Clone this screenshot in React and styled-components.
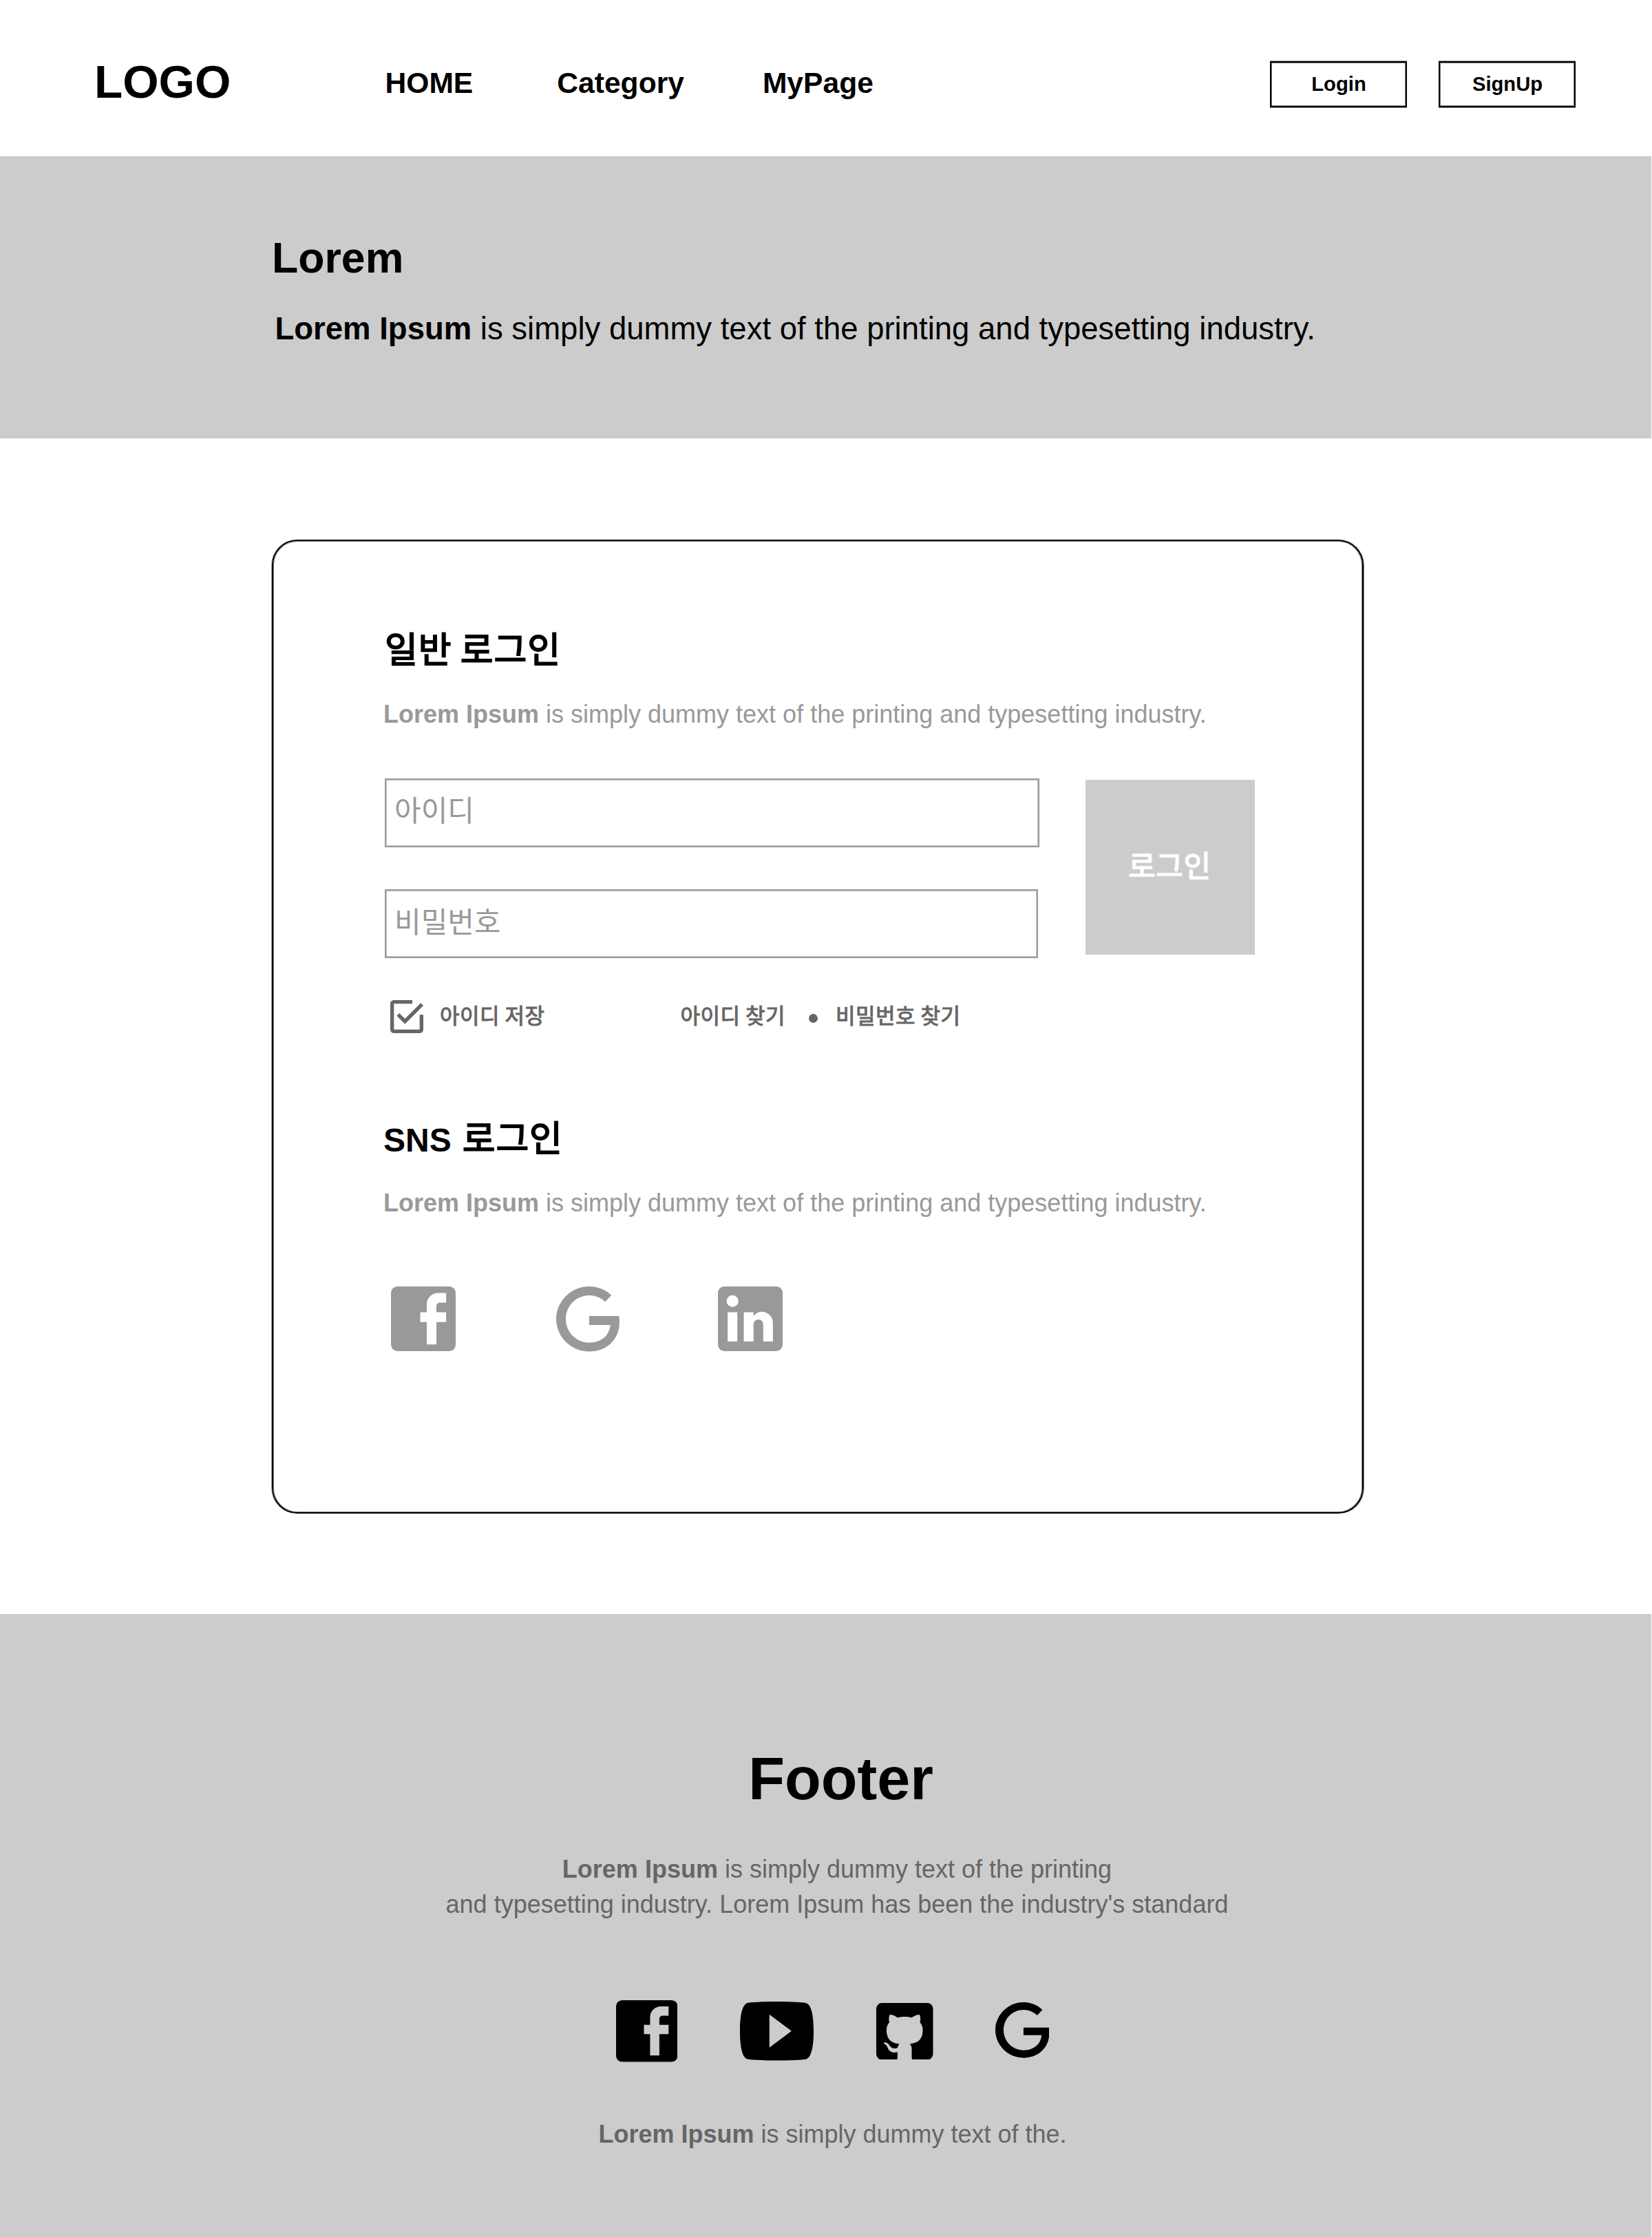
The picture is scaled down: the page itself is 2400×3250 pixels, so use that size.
import React from "react";
import styled, { createGlobalStyle, css } from "styled-components";

const latin = `"Liberation Sans", Arial, "Noto Sans CJK KR", sans-serif`;
const hangul = `"Noto Sans CJK KR", "Liberation Sans", sans-serif`;

/* A weight between the regular and bold cuts of the Hangul face. */
const semibold = css`
  font-weight: 400;
  -webkit-text-stroke: 0.034em currentColor;
  letter-spacing: 0.016em;
`;

const GlobalStyle = createGlobalStyle`
  *, *::before, *::after { box-sizing: border-box; }
  body { margin: 0; background: #fff; color: #000; font-family: ${latin}; }
  h1, h2, p { margin: 0; }
  button, input { font: inherit; }
`;

const Page = styled.div`
  width: 2400px;
  height: 3250px;
  display: flex;
  flex-direction: column;
  overflow: hidden;
`;

/* Header */
const Header = styled.header`
  height: 227px;
  flex: none;
  display: flex;
  align-items: flex-start;
  padding: 81px 111px 0 137px;
`;

const Logo = styled.div`
  flex: 0 0 422.5px;
  font-size: 67.4px;
  line-height: 75px;
  font-weight: 700;
`;

const Nav = styled.nav`
  display: grid;
  grid-template-columns: 249.8px 298.6px auto;
  padding-top: 15px;
`;

const NavLink = styled.span`
  font-size: 42.6px;
  line-height: 48px;
  font-weight: 700;
`;

const AuthButtons = styled.div`
  display: flex;
  gap: 46px;
  margin-left: auto;
  padding-top: 8px;
`;

const AuthButton = styled.button`
  width: 199px;
  height: 67px;
  display: flex;
  align-items: center;
  justify-content: center;
  padding: 0 0 0 1px;
  background: #fff;
  color: #000;
  border: 2px solid #000;
  box-shadow: 0 -1px 0 rgba(0, 0, 0, 0.4), 0 1px 0 rgba(0, 0, 0, 0.4),
    inset 0 0 0 1px rgba(0, 0, 0, 0.5);
  font-size: 29.2px;
  line-height: 33px;
  font-weight: 700;
`;

/* Hero */
const Hero = styled.section`
  width: 2399px;
  height: 410px;
  flex: none;
  padding: 112px 0 0 395px;
  background: #ccc;
`;

const HeroTitle = styled.h1`
  font-size: 62.6px;
  line-height: 70px;
  font-weight: 700;
`;

const HeroText = styled.p`
  margin-top: 43px;
  padding-left: 4.5px;
  font-size: 45.5px;
  line-height: 51px;
  white-space: nowrap;
`;

/* Login card */
const Card = styled.main`
  width: 1586px;
  height: 1415px;
  flex: none;
  margin: 147px 0 146px 395px;
  padding: 116px 0 0 160px;
  border: 2px solid #000;
  border-radius: 37px;
  box-shadow: -1px 0 0 rgba(0, 0, 0, 0.35), 1px 0 0 rgba(0, 0, 0, 0.45),
    inset 0 0 0 1px rgba(0, 0, 0, 0.5);
`;

const SectionTitle = styled.h2`
  display: flex;
  align-items: baseline;
  gap: 16px;
  margin-top: ${(p) => p.$top || 0}px;
  padding-left: ${(p) => p.$indent || 0}px;
  height: 75px;
  font-family: ${hangul};
  font-size: 52px;
  line-height: 75px;
  white-space: nowrap;
  ${semibold}
`;

const LatinWord = styled.span`
  font-family: ${latin};
  font-size: 48px;
  font-weight: 700;
  letter-spacing: 0;
  -webkit-text-stroke: 0;
`;

const Description = styled.p`
  margin-top: ${(p) => p.$top}px;
  font-size: 36px;
  line-height: 41px;
  color: #999;
  white-space: nowrap;
`;

const Form = styled.form`
  display: flex;
  gap: 67px;
  margin-top: 73px;
  padding-left: 2px;
`;

const Fields = styled.div`
  display: flex;
  flex-direction: column;
  gap: 61px;
  width: 951px;
`;

const Field = styled.label`
  width: ${(p) => p.$width}px;
  height: 100px;
  padding: ${(p) => p.$top}px 0 0 12px;
  border: 2px solid #999;
  box-shadow: inset 0 0 0 1px #c8c8c8;
  font-family: ${hangul};
  font-size: 42px;
  line-height: 61px;
  color: #999;
`;

const SubmitButton = styled.button`
  width: 246px;
  height: 254px;
  margin-top: 2px;
  padding: 0 1px 10px 0;
  border: 0;
  background: #ccc;
  color: #fff;
  font-family: ${hangul};
  font-size: 43px;
  ${semibold}
`;

const Options = styled.div`
  display: flex;
  align-items: center;
  height: 48px;
  margin-top: 61px;
  padding-left: 10px;
`;

const OptionText = styled.span`
  margin-left: ${(p) => p.$gap}px;
  padding-bottom: 7px;
  font-family: ${hangul};
  font-size: 31px;
  line-height: 45px;
  color: #666;
  white-space: nowrap;
  ${semibold}
`;

const Dot = styled.i`
  width: 13px;
  height: 13px;
  margin: 5px 0 0 ${(p) => p.$gap}px;
  border-radius: 50%;
  background: #666;
`;

const SocialRow = styled.div`
  display: flex;
  align-items: center;
  margin-top: 101px;
  padding-left: 11px;
  color: #999;
`;

/* Footer */
const Footer = styled.footer`
  width: 2399px;
  height: 905px;
  flex: none;
  display: flex;
  flex-direction: column;
  align-items: center;
  padding: 191px 0 0 20px;
  background: #ccc;
`;

const FooterTitle = styled.h2`
  padding-left: 24px;
  font-size: 86.4px;
  line-height: 97px;
  font-weight: 700;
`;

const FooterText = styled.p`
  margin-top: ${(p) => p.$top}px;
  padding-left: ${(p) => p.$shift || 0}px;
  font-size: 36px;
  line-height: ${(p) => p.$leading}px;
  color: #666;
  text-align: center;
  white-space: nowrap;
`;

const FooterIcons = styled.div`
  display: flex;
  align-items: center;
  height: 90px;
  margin-top: 114px;
`;

const Icon = styled.svg`
  display: block;
  flex: none;
  width: ${(p) => p.$w}px;
  height: ${(p) => p.$h || p.$w}px;
  margin-left: ${(p) => p.$gap || 0}px;
  margin-bottom: ${(p) => p.$lift || 0}px;
  fill: ${(p) => p.$color || "currentColor"};
  fill-rule: evenodd;
`;

const shapes = {
  check: {
    box: "3 3 18 18",
    d: "M19,19H5V5H15V3H5C3.89,3 3,3.89 3,5V19A2,2 0 0,0 5,21H19A2,2 0 0,0 21,19V11H19M7.91,10.08L6.5,11.5L11,16L21,6L19.59,4.58L11,13.17L7.91,10.08Z",
  },
  facebook: {
    box: "0 0 20 20",
    d: "M2,0H18A2,2 0 0,1 20,2V18A2,2 0 0,1 18,20H2A2,2 0 0,1 0,18V2A2,2 0 0,1 2,0ZM17.05,2H14.55A3.5,3.5 0 0,0 11.05,5.5V8H9.05V11H11.05V17.95H14.05V11H17.05V8H14.05V6A1,1 0 0,1 15.05,5H17.05Z",
  },
  google: {
    box: "2.03 2 19.47 20",
    d: "M21.35,11.1H12.18V13.83H18.69C18.36,17.64 15.19,19.27 12.19,19.27C8.36,19.27 5,16.25 5,12C5,7.9 8.2,4.73 12.2,4.73C15.29,4.73 17.1,6.7 17.1,6.7L19,4.72C19,4.72 16.56,2 12.1,2C6.42,2 2.03,6.8 2.03,12C2.03,17.05 6.16,22 12.25,22C17.6,22 21.5,18.33 21.5,12.91C21.5,11.76 21.35,11.1 21.35,11.1Z",
  },
  linkedin: {
    box: "2 2 20 20",
    d: "M19,19H16V13.7A1.5,1.5 0 0,0 14.5,12.2A1.5,1.5 0 0,0 13,13.7V19H10V10H13V11.2C13.5,10.36 14.59,9.8 15.5,9.8A3.5,3.5 0 0,1 19,13.3V19M6.5,8.31C5.5,8.31 4.69,7.5 4.69,6.5A1.81,1.81 0 0,1 6.5,4.69C7.5,4.69 8.31,5.5 8.31,6.5A1.81,1.81 0 0,1 6.5,8.31M8,19H5V10H8V19M20,2H4C2.89,2 2,2.89 2,4V20A2,2 0 0,0 4,22H20A2,2 0 0,0 22,20V4C22,2.89 21.1,2 20,2Z",
  },
  youtube: {
    box: "2 4 20 16",
    d: "M10,16.5V7.5L16,12M20,4.4C19.4,4.2 15.7,4 12,4C8.3,4 4.6,4.19 4,4.38C2.44,4.9 2,8.4 2,12C2,15.59 2.44,19.1 4,19.61C4.6,19.81 8.3,20 12,20C15.7,20 19.4,19.81 20,19.61C21.56,19.1 22,15.59 22,12C22,8.4 21.56,4.91 20,4.4Z",
  },
  github: {
    box: "2 2 20 20",
    d: "M4,2H20A2,2 0 0,1 22,4V20A2,2 0 0,1 20,22H14.85C14.5,21.92 14.5,21.24 14.5,21V18.25C14.5,17.33 14.17,16.72 13.81,16.41C16.04,16.16 18.38,15.32 18.38,11.5C18.38,10.39 18,9.5 17.35,8.79C17.45,8.54 17.8,7.5 17.25,6.15C17.25,6.15 16.41,5.88 14.5,7.17C13.71,6.95 12.85,6.84 12,6.84C11.15,6.84 10.29,6.95 9.5,7.17C7.59,5.88 6.75,6.15 6.75,6.15C6.2,7.5 6.55,8.54 6.65,8.79C6,9.5 5.62,10.39 5.62,11.5C5.62,15.31 7.95,16.17 10.17,16.42C9.89,16.67 9.63,17.11 9.54,17.76C8.97,18 7.5,18.45 6.63,16.93C6.63,16.93 6.1,15.97 5.1,15.9C5.1,15.9 4.12,15.88 5,16.5C5,16.5 5.68,16.81 6.14,17.97C6.14,17.97 6.73,19.91 9.5,19.31V21C9.5,21.24 9.5,21.92 9.14,22H4A2,2 0 0,1 2,20V4A2,2 0 0,1 4,2Z",
  },
};

function Glyph({ name, w, h, gap, lift, color }) {
  const { box, d } = shapes[name];
  return (
    <Icon
      viewBox={box}
      preserveAspectRatio="none"
      $w={w}
      $h={h}
      $gap={gap}
      $lift={lift}
      $color={color}
      aria-hidden="true"
    >
      <path d={d} />
    </Icon>
  );
}

export default function App() {
  return (
    <Page>
      <GlobalStyle />
      <Header>
        <Logo>LOGO</Logo>
        <Nav>
          <NavLink>HOME</NavLink>
          <NavLink>Category</NavLink>
          <NavLink>MyPage</NavLink>
        </Nav>
        <AuthButtons>
          <AuthButton type="button">Login</AuthButton>
          <AuthButton type="button">SignUp</AuthButton>
        </AuthButtons>
      </Header>

      <Hero>
        <HeroTitle>Lorem</HeroTitle>
        <HeroText>
          <b>Lorem Ipsum</b> is simply dummy text of the printing and typesetting industry.
        </HeroText>
      </Hero>

      <Card>
        <SectionTitle $top={1} $indent={2}>일반 로그인</SectionTitle>
        <Description $top={39}>
          <b>Lorem Ipsum</b> is simply dummy text of the printing and typesetting industry.
        </Description>
        <Form>
          <Fields>
            <Field $width={951} $top={11}>아이디</Field>
            <Field $width={949} $top={12}>비밀번호</Field>
          </Fields>
          <SubmitButton type="button">로그인</SubmitButton>
        </Form>
        <Options>
          <Glyph name="check" w={48} color="#666" />
          <OptionText $gap={24}>아이디 저장</OptionText>
          <OptionText $gap={197}>아이디 찾기</OptionText>
          <Dot $gap={34} />
          <OptionText $gap={26}>비밀번호 찾기</OptionText>
        </Options>

        <SectionTitle $top={112}>
          <LatinWord>SNS</LatinWord>
          <span>로그인</span>
        </SectionTitle>
        <Description $top={39}>
          <b>Lorem Ipsum</b> is simply dummy text of the printing and typesetting industry.
        </Description>
        <SocialRow>
          <Glyph name="facebook" w={94} />
          <Glyph name="google" w={92} h={94.5} gap={145.8} />
          <Glyph name="linkedin" w={94} gap={143.7} />
        </SocialRow>
      </Card>

      <Footer>
        <FooterTitle>Footer</FooterTitle>
        <FooterText $top={57} $shift={13} $leading={51}>
          <b>Lorem Ipsum</b> is simply dummy text of the printing
          <br />
          and typesetting industry. Lorem Ipsum has been the industry's standard
        </FooterText>
        <FooterIcons>
          <Glyph name="facebook" w={89.5} color="#000" />
          <Glyph name="youtube" w={107} h={85.6} gap={90.5} color="#000" />
          <Glyph name="github" w={82.5} gap={91.5} color="#000" />
          <Glyph name="google" w={78.5} h={80.7} gap={90} lift={3} color="#000" />
        </FooterIcons>
        <FooterText $top={84} $leading={41}>
          <b>Lorem Ipsum</b> is simply dummy text of the.
        </FooterText>
      </Footer>
    </Page>
  );
}
